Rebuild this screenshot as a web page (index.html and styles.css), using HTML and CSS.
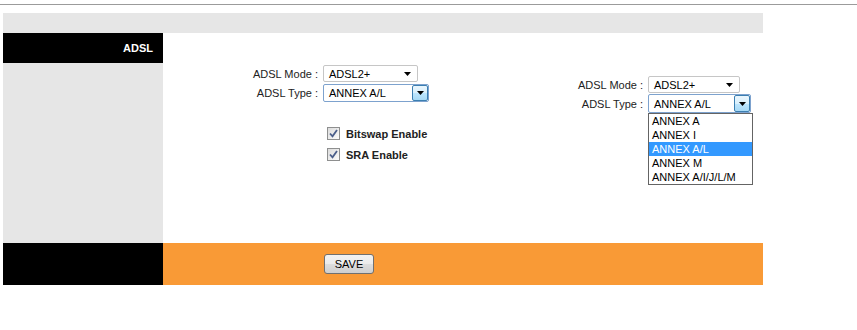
FILE: index.html
```html
<!DOCTYPE html>
<html lang="en">

<head>
    <meta charset="UTF-8">
    <meta name="viewport" content="width=device-width, initial-scale=1.0">
    <title>ADSL</title>
    <link rel="stylesheet" href="styles.css">
</head>

<body>
    <div class="topline"></div>
    <div class="page">
        <div class="band"></div>

        <div class="main">
            <div class="side">
                <div class="side-title">ADSL</div>
            </div>

            <div class="content">
                <div class="form">
                    <div class="grid">
                        <span class="lbl">ADSL Mode :</span>
                        <div class="combo combo-mode">
                            <span class="value">ADSL2+</span>
                            <svg class="arrow" width="7" height="4" viewBox="0 0 7 4"><path d="M0 0h7L3.5 4z" /></svg>
                        </div>

                        <span class="lbl">ADSL Type :</span>
                        <div class="combo combo-type focus">
                            <span class="value">ANNEX A/L</span>
                            <span class="drop-btn">
                                <svg class="arrow" width="7" height="4" viewBox="0 0 7 4"><path d="M0 0h7L3.5 4z" /></svg>
                            </span>
                        </div>
                    </div>

                    <div class="checks">
                        <label class="check">
                            <span class="box"><svg width="9" height="9" viewBox="0 0 9 9"><path d="M1 4.5l2.5 2.8L8 1" /></svg></span>
                            Bitswap Enable
                        </label>
                        <label class="check">
                            <span class="box"><svg width="9" height="9" viewBox="0 0 9 9"><path d="M1 4.5l2.5 2.8L8 1" /></svg></span>
                            SRA Enable
                        </label>
                    </div>
                </div>

                <!-- same form, with the type list opened -->
                <div class="demo">
                    <div class="grid grid-demo">
                        <span class="lbl">ADSL Mode :</span>
                        <div class="combo combo-mode">
                            <span class="value">ADSL2+</span>
                            <svg class="arrow" width="7" height="4" viewBox="0 0 7 4"><path d="M0 0h7L3.5 4z" /></svg>
                        </div>

                        <span class="lbl">ADSL Type :</span>
                        <div class="combo combo-type focus">
                            <span class="value">ANNEX A/L</span>
                            <span class="drop-btn">
                                <svg class="arrow" width="7" height="4" viewBox="0 0 7 4"><path d="M0 0h7L3.5 4z" /></svg>
                            </span>
                            <ul class="list">
                                <li>ANNEX A</li>
                                <li>ANNEX I</li>
                                <li class="selected">ANNEX A/L</li>
                                <li>ANNEX M</li>
                                <li>ANNEX A/I/J/L/M</li>
                            </ul>
                        </div>
                    </div>
                </div>
            </div>
        </div>

        <div class="foot">
            <div class="foot-side"></div>
            <div class="foot-main">
                <button class="save">SAVE</button>
            </div>
        </div>
    </div>
</body>

</html>
```

FILE: styles.css
```css
body {
    margin: 0;
    font-family: "Liberation Sans", Arial, sans-serif;
    font-size: 11px;
    color: #222;
    background-color: #fff;
}

.topline {
    margin-top: 4px;
    border-top: 1px solid #9b9b9b;
}

.page {
    width: 760px;
    margin: 8px 0 0 3px;
}

.band {
    height: 20px;
    background-color: #e6e6e6;
}

.main {
    display: grid;
    grid-template-columns: 160px 600px;
    height: 210px;
}

.side {
    background-color: #e6e6e6;
}

.side-title {
    height: 30px;
    line-height: 30px;
    padding-right: 10px;
    text-align: right;
    background-color: #000;
    color: #fff;
    font-weight: bold;
}

.content {
    display: flex;
    background-color: #fff;
}

.form {
    width: 415px;
    padding-top: 32px;
}

.grid {
    display: grid;
    grid-template-columns: 155px max-content;
    column-gap: 5px;
    row-gap: 2px;
    align-items: center;
}

.lbl {
    text-align: right;
    white-space: nowrap;
}

.combo {
    position: relative;
    box-sizing: border-box;
    display: flex;
    align-items: center;
    background-color: #fff;
    border: 1px solid #c6c6c6;
    border-radius: 2px;
    color: #000;
}

.combo .value {
    flex: 1;
    padding-left: 5px;
}

.combo-mode {
    width: 95px;
    height: 17px;
}

.combo-mode .arrow {
    margin-right: 6px;
}

.combo-type {
    width: 106px;
    height: 18px;
}

.combo.focus {
    border-color: #7da2ce;
}

.drop-btn {
    box-sizing: border-box;
    display: flex;
    align-items: center;
    justify-content: center;
    width: 16px;
    height: 100%;
    border: 1px solid #3c7fb1;
    border-radius: 2px;
    background: linear-gradient(#eaf6fd, #d9f0fc 50%, #bee6fd 51%, #a7d9f5);
}

.arrow path {
    fill: #000;
}

.checks {
    display: flex;
    flex-direction: column;
    gap: 8px;
    margin: 25px 0 0 164px;
}

.check {
    display: flex;
    align-items: center;
    gap: 6px;
    height: 13px;
    font-weight: bold;
}

.box {
    box-sizing: border-box;
    display: flex;
    align-items: center;
    justify-content: center;
    width: 13px;
    height: 13px;
    border: 1px solid #8e8f8f;
    background: linear-gradient(135deg, #dcdcdc, #fbfbfb);
}

.box path {
    fill: none;
    stroke: #4a5e8a;
    stroke-width: 1.8;
}

.demo {
    padding-top: 43px;
}

.grid-demo {
    grid-template-columns: 65px max-content;
    row-gap: 1px;
}

.grid-demo .combo-mode {
    width: 92px;
}

.grid-demo .combo-type {
    width: 103px;
    height: 19px;
}

.list {
    position: absolute;
    top: calc(100% + 1px);
    left: -1px;
    width: 105px;
    box-sizing: border-box;
    margin: 0;
    padding: 0;
    list-style: none;
    background-color: #fff;
    border: 1px solid #646464;
}

.list li {
    height: 14px;
    line-height: 14px;
    padding-left: 3px;
    color: #000;
}

.list li.selected {
    background-color: #3399ff;
    color: #fff;
}

.foot {
    display: grid;
    grid-template-columns: 160px 600px;
    height: 42px;
}

.foot-side {
    background-color: #000;
}

.foot-main {
    display: flex;
    align-items: center;
    padding-left: 161px;
    background-color: #f99a36;
}

.save {
    width: 50px;
    height: 20px;
    padding: 0;
    font-family: "Liberation Sans", Arial, sans-serif;
    font-size: 11px;
    color: #000;
    border: 1px solid #707070;
    border-radius: 3px;
    background: linear-gradient(#f2f2f2, #ebebeb 50%, #dddddd 51%, #cfcfcf);
    cursor: pointer;
}
```
